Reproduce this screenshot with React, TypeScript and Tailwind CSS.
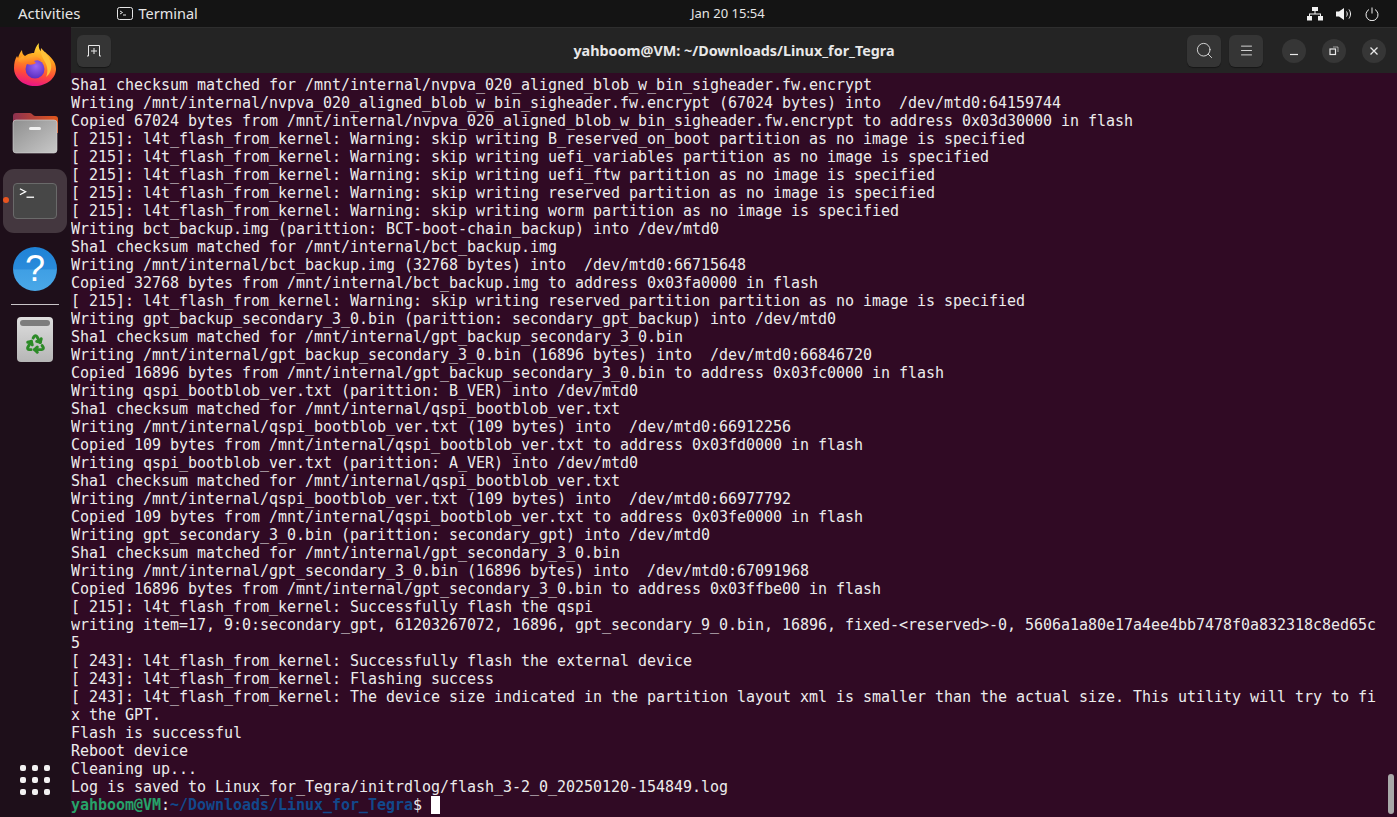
import { Search, Menu, Recycle } from "lucide-react";

const lines = [
  "Sha1 checksum matched for /mnt/internal/nvpva_020_aligned_blob_w_bin_sigheader.fw.encrypt",
  "Writing /mnt/internal/nvpva_020_aligned_blob_w_bin_sigheader.fw.encrypt (67024 bytes) into  /dev/mtd0:64159744",
  "Copied 67024 bytes from /mnt/internal/nvpva_020_aligned_blob_w_bin_sigheader.fw.encrypt to address 0x03d30000 in flash",
  "[ 215]: l4t_flash_from_kernel: Warning: skip writing B_reserved_on_boot partition as no image is specified",
  "[ 215]: l4t_flash_from_kernel: Warning: skip writing uefi_variables partition as no image is specified",
  "[ 215]: l4t_flash_from_kernel: Warning: skip writing uefi_ftw partition as no image is specified",
  "[ 215]: l4t_flash_from_kernel: Warning: skip writing reserved partition as no image is specified",
  "[ 215]: l4t_flash_from_kernel: Warning: skip writing worm partition as no image is specified",
  "Writing bct_backup.img (parittion: BCT-boot-chain_backup) into /dev/mtd0",
  "Sha1 checksum matched for /mnt/internal/bct_backup.img",
  "Writing /mnt/internal/bct_backup.img (32768 bytes) into  /dev/mtd0:66715648",
  "Copied 32768 bytes from /mnt/internal/bct_backup.img to address 0x03fa0000 in flash",
  "[ 215]: l4t_flash_from_kernel: Warning: skip writing reserved_partition partition as no image is specified",
  "Writing gpt_backup_secondary_3_0.bin (parittion: secondary_gpt_backup) into /dev/mtd0",
  "Sha1 checksum matched for /mnt/internal/gpt_backup_secondary_3_0.bin",
  "Writing /mnt/internal/gpt_backup_secondary_3_0.bin (16896 bytes) into  /dev/mtd0:66846720",
  "Copied 16896 bytes from /mnt/internal/gpt_backup_secondary_3_0.bin to address 0x03fc0000 in flash",
  "Writing qspi_bootblob_ver.txt (parittion: B_VER) into /dev/mtd0",
  "Sha1 checksum matched for /mnt/internal/qspi_bootblob_ver.txt",
  "Writing /mnt/internal/qspi_bootblob_ver.txt (109 bytes) into  /dev/mtd0:66912256",
  "Copied 109 bytes from /mnt/internal/qspi_bootblob_ver.txt to address 0x03fd0000 in flash",
  "Writing qspi_bootblob_ver.txt (parittion: A_VER) into /dev/mtd0",
  "Sha1 checksum matched for /mnt/internal/qspi_bootblob_ver.txt",
  "Writing /mnt/internal/qspi_bootblob_ver.txt (109 bytes) into  /dev/mtd0:66977792",
  "Copied 109 bytes from /mnt/internal/qspi_bootblob_ver.txt to address 0x03fe0000 in flash",
  "Writing gpt_secondary_3_0.bin (parittion: secondary_gpt) into /dev/mtd0",
  "Sha1 checksum matched for /mnt/internal/gpt_secondary_3_0.bin",
  "Writing /mnt/internal/gpt_secondary_3_0.bin (16896 bytes) into  /dev/mtd0:67091968",
  "Copied 16896 bytes from /mnt/internal/gpt_secondary_3_0.bin to address 0x03ffbe00 in flash",
  "[ 215]: l4t_flash_from_kernel: Successfully flash the qspi",
  "writing item=17, 9:0:secondary_gpt, 61203267072, 16896, gpt_secondary_9_0.bin, 16896, fixed-<reserved>-0, 5606a1a80e17a4ee4bb7478f0a832318c8ed65c",
  "5",
  "[ 243]: l4t_flash_from_kernel: Successfully flash the external device",
  "[ 243]: l4t_flash_from_kernel: Flashing success",
  "[ 243]: l4t_flash_from_kernel: The device size indicated in the partition layout xml is smaller than the actual size. This utility will try to fi",
  "x the GPT.",
  "Flash is successful",
  "Reboot device",
  "Cleaning up...",
  "Log is saved to Linux_for_Tegra/initrdlog/flash_3-2_0_20250120-154849.log",
];

function Firefox() {
  return (
    <svg viewBox="0 0 44 44" className="w-[44px] h-[44px]">
      <defs>
        <linearGradient id="ff1" x1="0.6" y1="0" x2="0.4" y2="1">
          <stop offset="0" stopColor="#ffe23a" />
          <stop offset="0.4" stopColor="#ff9a1e" />
          <stop offset="0.72" stopColor="#ff4a3a" />
          <stop offset="1" stopColor="#e8128a" />
        </linearGradient>
        <linearGradient id="ff3" x1="0.2" y1="0" x2="0.6" y2="1">
          <stop offset="0" stopColor="#ffb52e" />
          <stop offset="1" stopColor="#ff6a20" />
        </linearGradient>
        <radialGradient id="ff2" cx="0.55" cy="0.35" r="0.65">
          <stop offset="0" stopColor="#9a66f5" />
          <stop offset="1" stopColor="#5a2fc0" />
        </radialGradient>
      </defs>
      <path d="M26 1c-1 5 1 8 4 10l2-1c6 5 11 10 11 17 0 9-9 17-21 17C10 44 1 36 1 26c0-5 1-9 3-12l1 2c1-3 2-6 4-8 0 3 1 5 3 6 4-3 7-3 9-3 1-4 2-7 5-10z" fill="url(#ff1)" />
      <path d="M28 6c5 5 9 10 10 16 1 5-1 10-5 13 2-4 2-10-1-15-2-4-5-8-4-14z" fill="#ffc23a" />
      <circle cx="22" cy="27" r="9.5" fill="url(#ff2)" />
      <path d="M5 19c1-2 3-4 5-5l2 3c2-2 5-4 8-3 4 0 7 2 9 5-3-1-6-1-8 0l2 2c-3 2-6 2-9 1-3 0-7-1-9-3z" fill="url(#ff3)" />
    </svg>
  );
}

function Files() {
  return (
    <svg viewBox="0 0 46 44" className="w-[46px] h-[44px]">
      <defs>
        <linearGradient id="fo1" x1="0" y1="0" x2="1" y2="0">
          <stop offset="0" stopColor="#8c3150" />
          <stop offset="1" stopColor="#e2571c" />
        </linearGradient>
        <linearGradient id="fo2" x1="0" y1="0" x2="1" y2="1">
          <stop offset="0" stopColor="#8f8f8f" />
          <stop offset="1" stopColor="#c8c8c8" />
        </linearGradient>
      </defs>
      <path d="M1 6a3 3 0 0 1 3-3h14c2 0 3 3 5 3h20a3 3 0 0 1 3 3v14H1z" fill="url(#fo1)" />
      <rect x="1" y="10" width="44" height="33" rx="3" fill="url(#fo2)" stroke="#d6d6d6" strokeWidth="0.6" />
      <rect x="17" y="17" width="12" height="3" rx="1.5" fill="#f2f2f2" />
    </svg>
  );
}

function TerminalApp() {
  return (
    <div className="relative w-[44px] h-[36px] rounded-[4px] bg-[#474747] border border-[#6a6a6a]">
      <svg viewBox="0 0 44 36" className="absolute inset-0 w-full h-full">
        <path d="M6 5l6 3.200-6 3.200" fill="none" stroke="#fff" strokeWidth="1.4" />
        <path d="M13 14h8" stroke="#fff" strokeWidth="1.4" />
      </svg>
    </div>
  );
}

function Help() {
  return (
    <div className="w-[44px] h-[44px] rounded-full bg-[linear-gradient(to_bottom,#1f82d6_0%,#2a8bdb_50%,#3f9fe4_52%,#4aa8e8_100%)] flex items-center justify-center">
      <span className="text-white text-[36px] leading-none font-['Liberation_Sans',sans-serif]">?</span>
    </div>
  );
}

function Trash() {
  return (
    <div className="w-[36px] h-[45px] rounded-[4px] bg-gradient-to-b from-[#dedede] to-[#b6b6b6] px-[3px] pt-[3px] flex flex-col items-center">
      <div className="w-full h-[6px] rounded-[3px] bg-[#7d7d7d]" />
      <Recycle size={21} strokeWidth={3.4} className="mt-[7px] text-[#2c8a27]" />
    </div>
  );
}

function Dock() {
  return (
    <div className="w-[71px] shrink-0 bg-[#1e0f1a] flex flex-col items-center pt-[15px] pb-[22px] pr-[1px] relative">
      <Firefox />
      <div className="mt-[24px]">
        <Files />
      </div>
      <div className="relative mt-[15px] w-[64px] h-[64px] rounded-[11px] bg-[#44373f] flex items-center justify-center">
        <TerminalApp />
        <div className="absolute left-0 top-[28px] w-[6px] h-[6px] rounded-full bg-[#e95420]" />
      </div>
      <div className="mt-[14px]">
        <Help />
      </div>
      <div className="mt-[13px] w-[48px] h-px bg-[#c9c5c8]" />
      <div className="mt-[12px]">
        <Trash />
      </div>
      <div className="mt-auto grid grid-cols-3 gap-x-[6px] gap-y-[6px]">
        {Array.from({ length: 9 }).map((_, i) => (
          <div key={i} className="w-[6px] h-[6px] rounded-[2px] bg-[#f2f0f1]" />
        ))}
      </div>
    </div>
  );
}

function TopBar() {
  return (
    <div className="h-[27px] shrink-0 bg-[#141414] text-[#e6e6e6] text-[15px] flex items-center relative font-['Noto_Sans','Open_Sans',sans-serif]">
      <span className="ml-[18px]">Activities</span>
      <svg viewBox="0 0 16 14" className="w-[16px] h-[14px] ml-[36px]" fill="none" stroke="#e6e6e6" strokeWidth="1">
        <rect x="0.5" y="0.5" width="15" height="12" rx="2" />
        <path d="M3 4l2.500 1.500L3 7M6 8h3" />
      </svg>
      <span className="ml-[6px] text-[14.5px]">Terminal</span>
      <span className="absolute left-[691px] top-[4px] text-[13px]">Jan 20  15:54</span>
      <div className="ml-auto mr-[18px] flex items-center gap-[13px]">
        <svg viewBox="0 0 16 14" className="w-[16px] h-[14px]" fill="#f2f2f2">
          <rect x="5" y="0" width="6" height="4" />
          <rect x="0" y="9" width="5" height="4.5" />
          <rect x="11" y="9" width="5" height="4.5" />
          <path d="M7.500 4h1v2.500H14V9h-1V7.500H3V9H2V6.500h5.500z" />
        </svg>
        <svg viewBox="0 0 16 14" className="w-[16px] h-[14px]" fill="none" stroke="#f2f2f2">
          <path d="M0 4.500h3L8 1v12L3 9.500H0z" fill="#f2f2f2" stroke="none" />
          <path d="M10.500 4.500c1 1.500 1 3.500 0 5M13 2.500c2 3 2 6 0 9" strokeWidth="1" />
        </svg>
        <svg viewBox="0 0 14 14" className="w-[14px] h-[14px]" fill="none" stroke="#f2f2f2" strokeWidth="1">
          <path d="M4 2.500a6 6 0 1 0 6 0M7 0.500v6" />
        </svg>
      </div>
    </div>
  );
}

function HeaderBtn({ children }: { children: React.ReactNode }) {
  return (
    <div className="w-[34px] h-[32px] rounded-[6px] bg-[#353535] shadow-[0_1px_1px_rgba(0,0,0,0.4)] flex items-center justify-center text-[#e8e8e8]">
      {children}
    </div>
  );
}

function WinBtn({ children }: { children: React.ReactNode }) {
  return (
    <div className="w-[24px] h-[24px] rounded-full bg-[#363636] flex items-center justify-center text-[#e8e8e8]">
      {children}
    </div>
  );
}

function TitleBar() {
  return (
    <div className="h-[46px] shrink-0 bg-[#242424] relative flex items-center pl-[6px] pr-[11px] border-t border-[#2e2e2e]">
      <HeaderBtn>
        <svg viewBox="0 0 16 14" className="w-[16px] h-[14px]" fill="none" stroke="#e8e8e8" strokeWidth="1">
          <path d="M1 12h1.500V1.500h11V12H15M8 4v6M5 7h6" />
        </svg>
      </HeaderBtn>
      <div className="absolute inset-x-0 top-0 h-full flex items-center justify-center text-[14.35px] font-bold text-[#e8e8e8] font-['Noto_Sans','Open_Sans',sans-serif]">
        yahboom@VM: ~/Downloads/Linux_for_Tegra
      </div>
      <div className="ml-auto flex items-center relative">
        <HeaderBtn>
          <Search size={19} strokeWidth={1.1} />
        </HeaderBtn>
        <div className="ml-[8px]">
          <HeaderBtn>
            <Menu size={15} strokeWidth={1.4} />
          </HeaderBtn>
        </div>
        <div className="ml-[19px] flex items-center gap-[16px]">
          <WinBtn>
            <svg viewBox="0 0 10 10" className="w-[10px] h-[10px]" stroke="#e8e8e8" strokeWidth="1.200">
              <path d="M1 8.500h8" />
            </svg>
          </WinBtn>
          <WinBtn>
            <svg viewBox="0 0 10 10" className="w-[10px] h-[10px]" fill="none" stroke="#e8e8e8">
              <rect x="1" y="3" width="5.500" height="5.500" strokeWidth="1.200" />
              <path d="M4 1h5v5" strokeWidth="0.6" />
            </svg>
          </WinBtn>
          <WinBtn>
            <svg viewBox="0 0 10 10" className="w-[10px] h-[10px]" stroke="#e8e8e8" strokeWidth="1.300">
              <path d="M1.500 1.500l7 7M8.500 1.500l-7 7" />
            </svg>
          </WinBtn>
        </div>
      </div>
    </div>
  );
}

function TerminalBody() {
  return (
    <div className="flex-1 min-h-0 bg-[#300a24] relative overflow-hidden pt-[3px] text-[#ececec] text-[15px] leading-[18px] tracking-[-0.03px] font-['DejaVu_Sans_Mono',monospace]">
      {lines.map((line, i) => (
        <div key={i} className="h-[18px] whitespace-pre">
          {line}
        </div>
      ))}
      <div className="h-[18px] whitespace-pre flex">
        <span className="font-bold text-[#26a269]">yahboom@VM</span>
        <span>:</span>
        <span className="font-bold text-[#12488b]">~/Downloads/Linux_for_Tegra</span>
        <span>$ </span>
        <span className="w-[9px] h-[18px] bg-white" />
      </div>
      <div className="absolute right-[3px] bottom-[3px] w-[6px] h-[40px] rounded-full bg-[#a9a9a9]" />
    </div>
  );
}

export default function App() {
  return (
    <div className="w-[1397px] h-[817px] overflow-hidden flex flex-col">
      <TopBar />
      <div className="flex-1 min-h-0 flex">
        <Dock />
        <div className="flex-1 min-w-0 flex flex-col">
          <TitleBar />
          <TerminalBody />
        </div>
      </div>
    </div>
  );
}
